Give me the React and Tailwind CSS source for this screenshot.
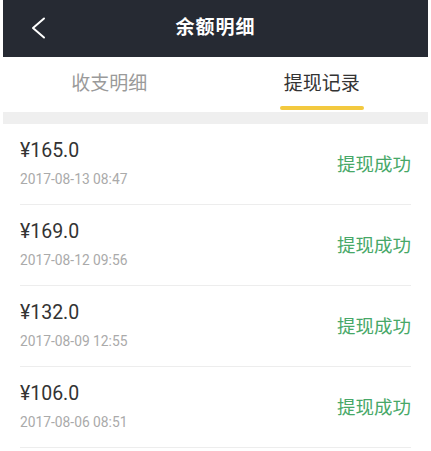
const records = [
  { amount: "¥165.0", time: "2017-08-13 08:47", status: "提现成功" },
  { amount: "¥169.0", time: "2017-08-12 09:56", status: "提现成功" },
  { amount: "¥132.0", time: "2017-08-09 12:55", status: "提现成功" },
  { amount: "¥106.0", time: "2017-08-06 08:51", status: "提现成功" },
];

export default function App() {
  return (
    <div
      className="w-[431px] h-[451px] overflow-hidden bg-white px-[3px]"
      style={{ fontFamily: 'Roboto, "Noto Sans CJK SC", sans-serif' }}
    >
      <div className="relative h-[57px] bg-[#262a33] flex items-center justify-center">
        <svg className="absolute left-[27px] top-[17px]" width="18" height="22" viewBox="0 0 18 22" fill="none">
          <polyline points="14,1.5 3,11 14,20.5" stroke="white" strokeWidth="2" strokeLinecap="round" strokeLinejoin="round" />
        </svg>
        <span className="text-white text-[19px] font-bold tracking-[1px]">余额明细</span>
      </div>
      <div className="flex h-[55px]">
        <div className="flex-1 flex items-center justify-center text-[#9a9a9a] text-[19px]">收支明细</div>
        <div className="flex-1 relative flex items-center justify-center text-[#333] text-[19px]">
          提现记录
          <div className="absolute bottom-[2px] left-1/2 -translate-x-1/2 w-[84px] h-[4px] rounded-full bg-[#f3c93f]" />
        </div>
      </div>
      <div className="h-[12px] bg-[#efefef]" />
      <div className="px-[17px]">
        {records.map((r) => (
          <div key={r.time} className="flex items-center justify-between h-[81px] border-b border-[#ededed]">
            <div className="flex flex-col -mt-[2px]">
              <span className="text-[19.5px] text-[#333] leading-[22px]">{r.amount}</span>
              <span className="text-[13.8px] text-[#aaa] leading-[16px] mt-[9px]">{r.time}</span>
            </div>
            <span className="text-[18.5px] text-[#47a868] mt-[4px]">{r.status}</span>
          </div>
        ))}
      </div>
    </div>
  );
}
